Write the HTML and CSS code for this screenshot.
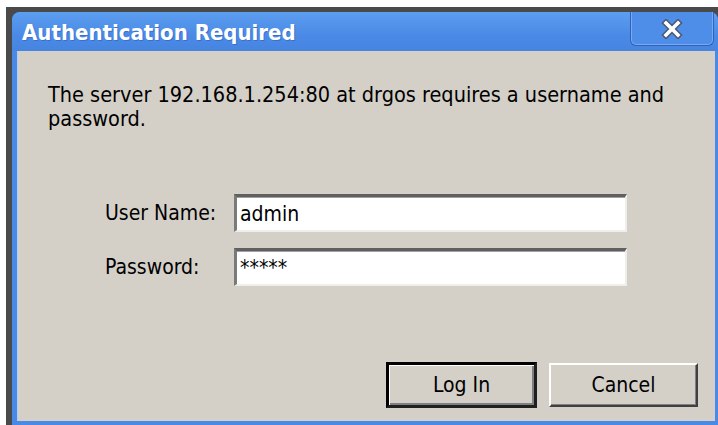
FILE: index.html
```html
<!DOCTYPE html>
<html>
<head>
<meta charset="utf-8">
<link rel="stylesheet" href="styles.css">
</head>
<body>
<div class="desk">
  <div class="window">
    <div class="titlebar">
      <span class="title">Authentication Required</span>
      <button class="close" type="button" aria-label="Close">
        <svg width="24" height="20" viewBox="0 0 24 20">
          <path d="M6 4 L18 16 M18 4 L6 16" stroke="#4a5870" stroke-width="6.5" stroke-linecap="square" fill="none"/>
          <path d="M6 4 L18 16 M18 4 L6 16" stroke="#ffffff" stroke-width="3.6" stroke-linecap="square" fill="none"/>
        </svg>
      </button>
    </div>
    <div class="content">
      <p class="message">The server 192.168.1.254:80 at drgos requires a username and password.</p>
      <div class="fields">
        <label class="label" for="user">User Name:</label>
        <input class="field" id="user" type="text" value="admin">
        <label class="label" for="pass">Password:</label>
        <input class="field" id="pass" type="text" value="*****">
      </div>
      <div class="actions">
        <button class="btn default" type="button">Log In</button>
        <button class="btn" type="button">Cancel</button>
      </div>
    </div>
  </div>
</div>
</body>
</html>
```
FILE: styles.css
```css
html, body {
  margin: 0;
  padding: 0;
  background: #ffffff;
  width: 718px;
  height: 425px;
  overflow: hidden;
}

.desk {
  margin: 7px 0 0 6px;
  background: #4a4a4a;
  padding: 5px 0 0 6px;
  height: 413px;
  box-sizing: content-box;
}

.window {
  height: 413px;
  box-sizing: border-box;
  background: #4a8ae6;
  border-radius: 8px 8px 0 0;
  padding: 0 3px 4px 5px;
  display: flex;
  flex-direction: column;
}

.titlebar {
  height: 39px;
  display: flex;
  align-items: flex-start;
  justify-content: space-between;
  background: linear-gradient(#5c9ef0, #4a8ae6 60%, #4684e0);
  border-radius: 8px 8px 0 0;
  margin: 0 -3px 0 -5px;
  padding: 0 4px 0 10px;
}

.title {
  color: #ffffff;
  font-family: "DejaVu Sans Condensed", "DejaVu Sans", sans-serif;
  font-weight: bold;
  font-size: 22px;
  line-height: 41px;
  text-shadow: 1px 1px 0 #3a70c8;
}

.close {
  margin: 0;
  padding: 0;
  width: 84px;
  height: 34px;
  border: 1px solid #2f62b8;
  border-top: none;
  border-radius: 0 0 6px 6px;
  background: #4e8ee8;
  box-shadow: inset 1px 0 0 #78aaf2, inset -1px 0 0 #78aaf2, inset 0 -1px 0 #78aaf2;
  display: flex;
  align-items: center;
  justify-content: center;
}

.content {
  flex: 1;
  background: #d4d0c8;
  border-left: 1px solid #b3cdf2;
  display: flex;
  flex-direction: column;
  padding: 0 17px 13px 30px;
  font-family: "DejaVu Sans Condensed", "DejaVu Sans", sans-serif;
  font-size: 21.5px;
  color: #000000;
}

.message {
  margin: 32px 0 0;
  line-height: 24px;
}

.fields {
  margin: 63px 0 0 57px;
  display: grid;
  grid-template-columns: 129px 393px;
  row-gap: 16px;
  align-items: center;
}

.label {
  font-size: 21px;
}

.field {
  width: 393px;
  height: 38px;
  box-sizing: border-box;
  margin: 0;
  padding: 0 0 0 3px;
  background: #ffffff;
  border-style: solid;
  border-width: 3px 2px 2px 3px;
  border-color: #606060 #eeeeea #eeeeea #7a7a7a;
  box-shadow: inset 0 1px 0 #a0a0a0;
  font-family: "DejaVu Sans Condensed", "DejaVu Sans", sans-serif;
  font-size: 21px;
  color: #000000;
  outline: none;
}

.actions {
  margin-top: auto;
  display: flex;
  justify-content: flex-end;
  align-items: center;
  gap: 12px;
}

.btn {
  width: 149px;
  height: 44px;
  margin: 0;
  padding: 0;
  background: #d4d0c8;
  border-style: solid;
  border-width: 2px;
  border-color: #ffffff #404040 #404040 #ffffff;
  box-shadow: inset -1px -1px 0 #808080;
  font-family: "DejaVu Sans Condensed", "DejaVu Sans", sans-serif;
  font-size: 21px;
  color: #000000;
}

.btn.default {
  width: 151px;
  height: 46px;
  border-width: 3px;
  border-color: #000000 #202020 #202020 #000000;
  box-shadow: inset 1px 1px 0 #ffffff, inset -2px -2px 0 #808080;
}
```
